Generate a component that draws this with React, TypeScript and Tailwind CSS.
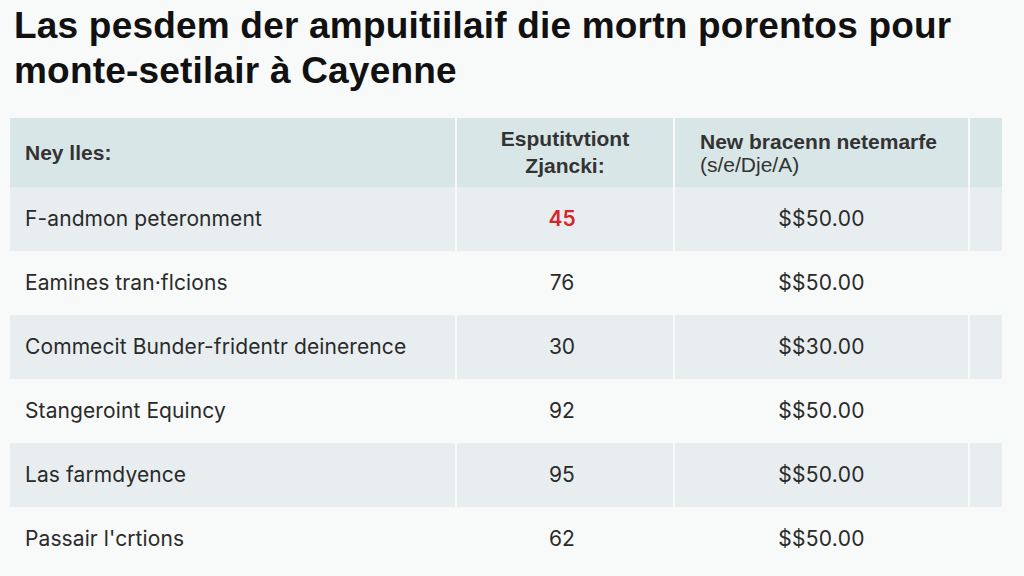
const rows = [
  { name: "F-andmon peteronment", qty: "45", price: "$$50.00", red: true },
  { name: "Eamines tran·flcions", qty: "76", price: "$$50.00" },
  { name: "Commecit Bunder-fridentr deinerence", qty: "30", price: "$$30.00" },
  { name: "Stangeroint Equincy", qty: "92", price: "$$50.00" },
  { name: "Las farmdyence", qty: "95", price: "$$50.00" },
  { name: "Passair l'crtions", qty: "62", price: "$$50.00" },
];

export default function App() {
  return (
    <div className="w-[1024px] h-[576px] overflow-hidden bg-[#f8f9f9] text-[#2a2a2a]">
      <h1 className="pl-[14px] pt-[3px] text-[37px] leading-[45px] font-bold tracking-[0.2px] text-[#111] font-['Liberation_Sans',sans-serif]">
        Las pesdem der ampuitiilaif die mortn porentos pour
        <br />
        monte-setilair à Cayenne
      </h1>

      <div className="mt-[25px] ml-[10px] grid grid-cols-[445px_216px_293px_32px] gap-x-[2px] font-['Inter',sans-serif]">
        <div className="h-[69px] bg-[#d9e6e7] flex items-center pl-[15px] text-[21px] font-bold text-[#333] font-['Liberation_Sans',sans-serif]">
          Ney lles:
        </div>
        <div className="h-[69px] bg-[#d9e6e7] flex flex-col items-center justify-center pb-[2px] text-[21px] leading-[27px] font-bold text-[#333] font-['Liberation_Sans',sans-serif]">
          <span>Esputitvtiont</span>
          <span>Zjancki:</span>
        </div>
        <div className="h-[69px] bg-[#d9e6e7] flex flex-col justify-center pl-[25px] text-[21px] leading-[23px] text-[#333] font-['Liberation_Sans',sans-serif]">
          <span className="font-bold">New bracenn netemarfe</span>
          <span>(s/e/Dje/A)</span>
        </div>
        <div className="h-[69px] bg-[#d9e6e7]" />

        {rows.map((r, i) => {
          const bg = i % 2 === 0 ? "bg-[#e8eeef]" : "";
          return (
            <div key={r.name} className="contents">
              <div className={`h-[64px] ${bg} flex items-center pl-[15px] text-[21px] tracking-[0.1px]`}>
                {r.name}
              </div>
              <div
                className={`h-[64px] ${bg} flex items-center justify-center pr-[6px] text-[21px] ${r.red ? "text-[#d7262b] font-semibold" : ""}`}
              >
                {r.qty}
              </div>
              <div className={`h-[64px] ${bg} flex items-center justify-center text-[21px] tracking-[0.3px]`}>
                {r.price}
              </div>
              <div className={`h-[64px] ${bg}`} />
            </div>
          );
        })}
      </div>
    </div>
  );
}
